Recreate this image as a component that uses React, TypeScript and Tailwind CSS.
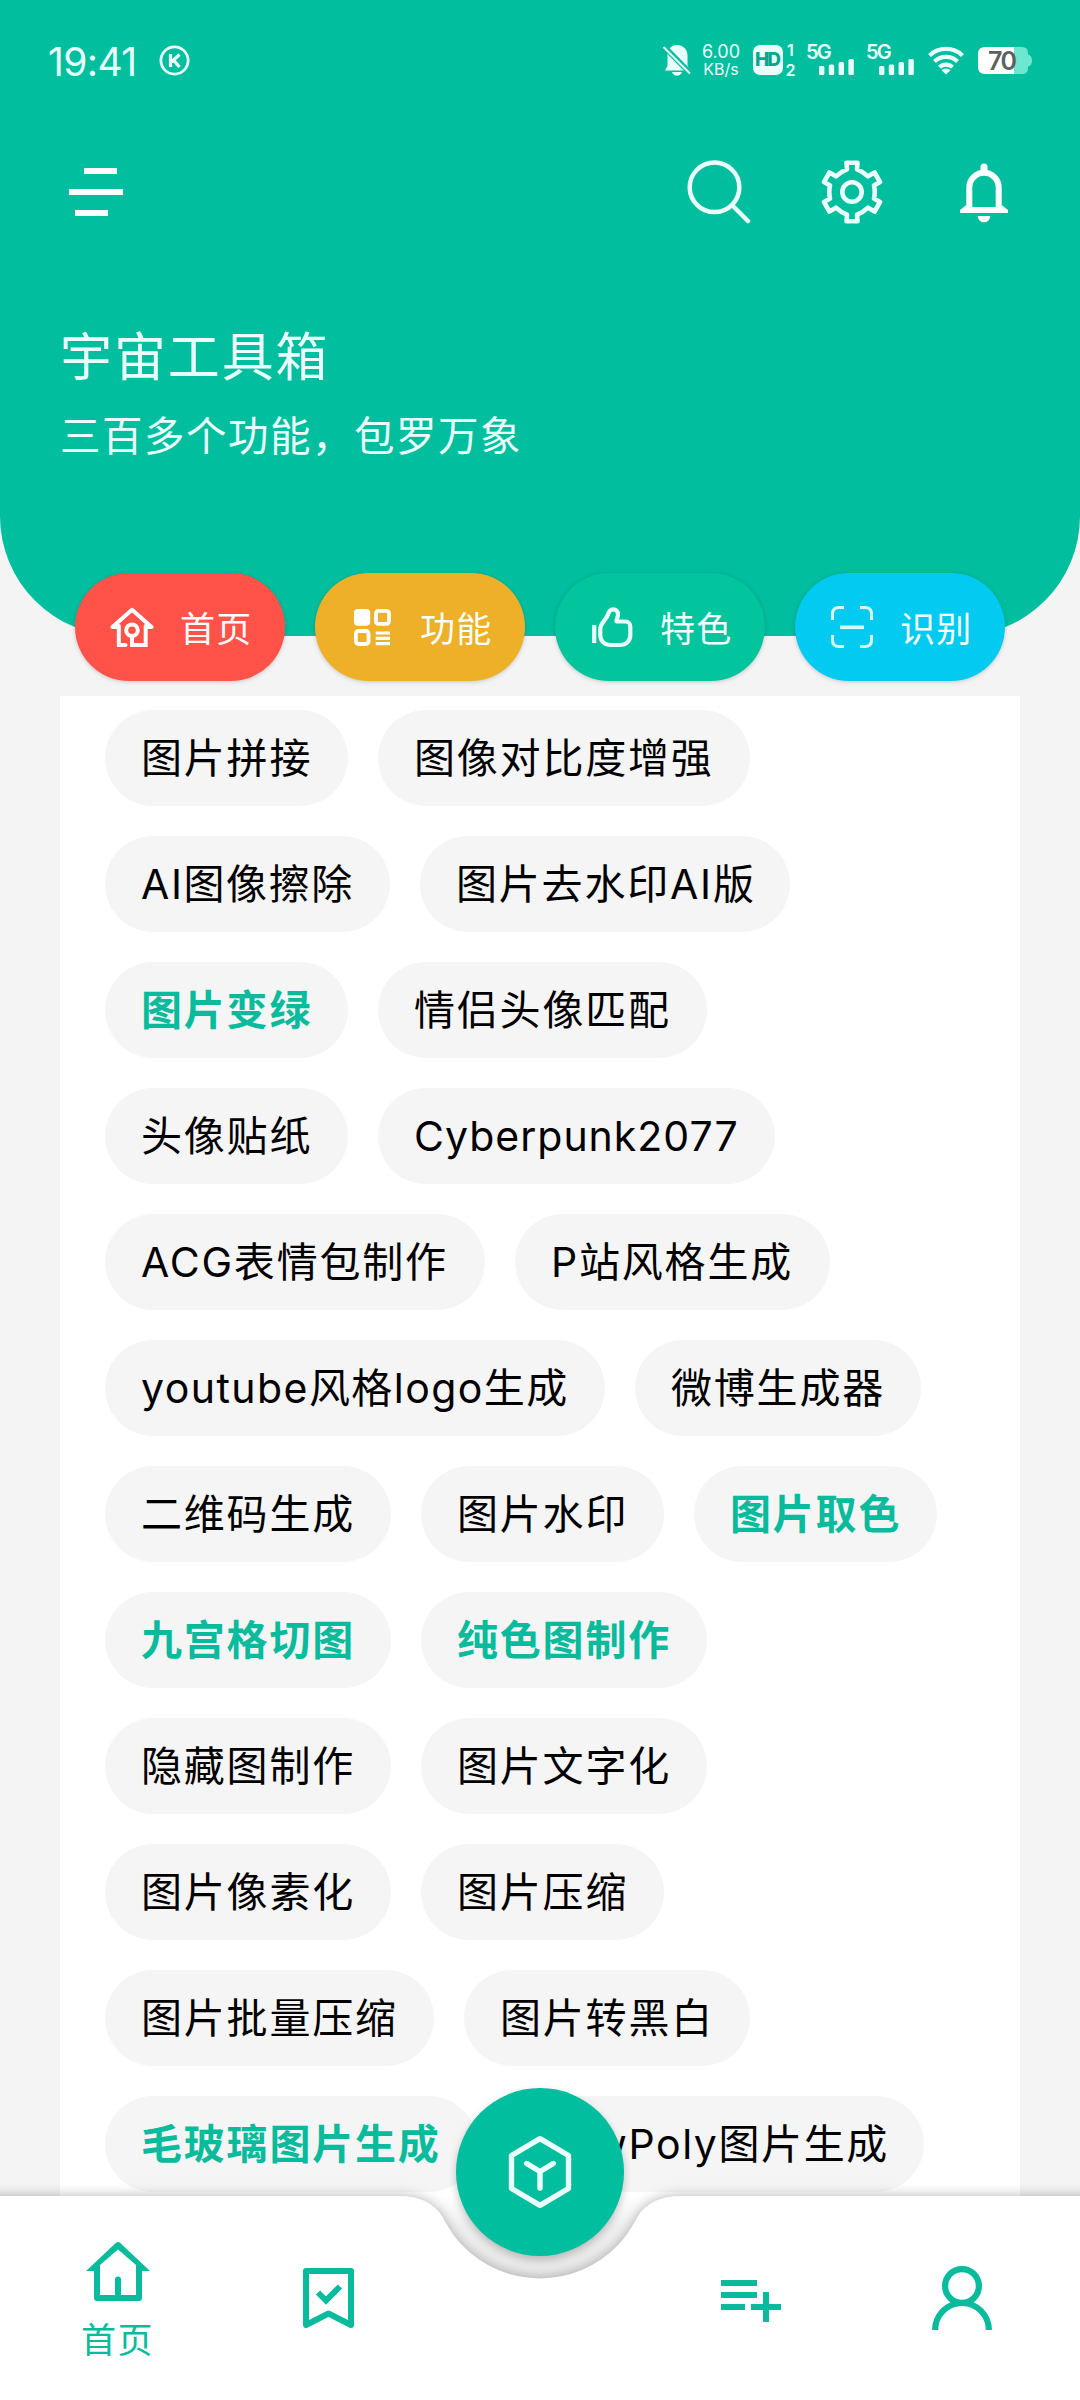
import React from "react";
import clsx from "clsx";

interface IChip {
  name: string;
  width: string;
  hot?: boolean;
  spacing?: string;
}

const chipRows: IChip[][] = [
  [
    { name: "图片拼接", width: "w-[243px]" },
    { name: "图像对比度增强", width: "w-[372px]" },
  ],
  [
    { name: "AI图像擦除", width: "w-[285px]", spacing: "tracking-[1.6px]" },
    { name: "图片去水印AI版", width: "w-[370px]" },
  ],
  [
    { name: "图片变绿", width: "w-[243px]", hot: true },
    { name: "情侣头像匹配", width: "w-[329px]" },
  ],
  [
    { name: "头像贴纸", width: "w-[243px]" },
    { name: "Cyberpunk2077", width: "w-[397px]", spacing: "tracking-[1px]" },
  ],
  [
    { name: "ACG表情包制作", width: "w-[380px]" },
    { name: "P站风格生成", width: "w-[315px]" },
  ],
  [
    { name: "youtube风格logo生成", width: "w-[500px]", spacing: "tracking-[1.45px]" },
    { name: "微博生成器", width: "w-[286px]" },
  ],
  [
    { name: "二维码生成", width: "w-[286px]" },
    { name: "图片水印", width: "w-[243px]" },
    { name: "图片取色", width: "w-[243px]", hot: true },
  ],
  [
    { name: "九宫格切图", width: "w-[286px]", hot: true },
    { name: "纯色图制作", width: "w-[286px]", hot: true },
  ],
  [
    { name: "隐藏图制作", width: "w-[286px]" },
    { name: "图片文字化", width: "w-[286px]" },
  ],
  [
    { name: "图片像素化", width: "w-[286px]" },
    { name: "图片压缩", width: "w-[243px]" },
  ],
  [
    { name: "图片批量压缩", width: "w-[329px]" },
    { name: "图片转黑白", width: "w-[286px]" },
  ],
  [
    { name: "毛玻璃图片生成", width: "w-[372px]", hot: true },
    { name: "LowPoly图片生成", width: "w-[417px]", spacing: "tracking-[1.6px]" },
  ],
];

function SignalIcon() {
  return (
    <div className="relative w-[48px] h-[30px]">
      <span className="absolute left-[-1px] top-[-3px] text-[20px] leading-[20px] font-semibold tracking-[-1.8px]">
        5G
      </span>
      <svg className="absolute left-[12px] top-[14px]" width="36" height="16" fill="currentColor">
        <rect x="0" y="7" width="5.4" height="9" rx="1.5" />
        <rect x="9.8" y="5.5" width="5.4" height="10.5" rx="1.5" />
        <rect x="19.6" y="3" width="5.4" height="13" rx="1.5" />
        <rect x="29.4" y="0" width="5.4" height="16" rx="1.5" />
      </svg>
    </div>
  );
}

function StatusBar() {
  return (
    <div className="h-[120px] pl-[48px] pr-[48px] flex items-center justify-between text-[#eafffb]">
      <div className="flex items-center">
        <span className="w-[111px] mt-[3px] text-[39px] leading-[38px] tracking-[-0.6px]">19:41</span>
        <svg width="31" height="31" viewBox="0 0 31 31" fill="none" stroke="currentColor">
          <circle cx="15.5" cy="15.5" r="13.6" strokeWidth="2.8" />
          <path d="M11.500 9v13M20.500 9.500l-8 7.500M14.500 15l6 7" strokeWidth="3.200" />
        </svg>
      </div>
      <div className="flex items-center">
        <svg width="28" height="31" viewBox="0 0 28 31" fill="currentColor">
          <path d="M14 0c6 0 10.500 4.500 10.500 10.500V21l3 4.500H2L4.500 21V10.500C4.500 4.500 8 0 14 0Z" />
          <path d="M9 27h10c-1 2.500-2.800 3.800-5 3.800S10 29.500 9 27Z" />
          <path d="M0 .5 28 29" stroke="#00be9e" strokeWidth="5.500" />
          <path d="M.5 2 27 28.500" stroke="currentColor" strokeWidth="2" />
        </svg>
        <div className="w-[40px] ml-[10px] h-[33px] flex flex-col justify-between items-center leading-[15px]">
          <span className="text-[18px]">6.00</span>
          <span className="text-[16px]">KB/s</span>
        </div>
        <div className="ml-[12px] w-[30px] h-[30px] rounded-[7px] bg-[#eafffb] text-[#00a88e] text-[19px] leading-[30px] font-extrabold tracking-[-2px] pr-[2px] text-center">
          HD
        </div>
        <div className="ml-[2px] w-[11px] h-[36px] flex flex-col justify-between items-center text-[16px] leading-[16px] font-semibold">
          <span>1</span>
          <span>2</span>
        </div>
        <div className="ml-[11px] flex gap-[12px]">
          <SignalIcon />
          <SignalIcon />
        </div>
        <svg className="ml-[13px]" width="36" height="29" viewBox="0 0 36 29" fill="none" stroke="currentColor" strokeWidth="4.200">
          <path d="M1.500 9.500a24 24 0 0 1 33 0" />
          <path d="M6.500 15.500a16.500 16.500 0 0 1 23 0" />
          <path d="M11.500 21.200a9.500 9.500 0 0 1 13 0" />
          <path d="m18 28.500-4.500-4.300a6.500 6.500 0 0 1 9 0z" fill="currentColor" stroke="none" />
        </svg>
        <div className="relative ml-[14px] w-[54px] h-[27px]">
          <svg width="54" height="27" viewBox="0 0 54 27">
            <path d="M36 0h8q6 0 6 6v1.500q4 1 4 6t-4 6V21q0 6-6 6h-8z" fill="#6fe6cf" />
            <path d="M36 0H7Q0 0 0 7v13q0 7 7 7h29z" fill="#ffffff" />
          </svg>
          <span className="absolute left-[10px] top-0 text-[25px] leading-[28px] font-semibold tracking-[-1.500px] text-[#5b6060]">
            70
          </span>
        </div>
      </div>
    </div>
  );
}

function Toolbar() {
  return (
    <div className="h-[144px] pl-[69px] pr-[72px] flex items-center justify-between text-[#eafffb]">
      <svg width="54" height="48" fill="#ffffff">
        <rect x="15" y="0" width="33" height="6" />
        <rect x="0" y="21" width="54" height="6" />
        <rect x="6" y="42" width="33" height="6" />
      </svg>
      <div className="flex items-center">
        <svg width="66" height="64" viewBox="0 0 66 64" fill="none" stroke="currentColor" strokeWidth="4.500">
          <circle cx="27.500" cy="27.300" r="24.800" />
          <path d="m45.500 45.500 15.500 15.500" strokeLinecap="round" />
        </svg>
        <svg className="ml-[68px]" width="62" height="64" viewBox="-31 -32 62 64" fill="none" stroke="currentColor" strokeWidth="4.600" strokeLinejoin="round">
          <path d="M-5.500-29.300H5.500L5-22.700Q11-20.500 16-15.700L22.600-19.500 28-10 22-6.500Q23.500 0 22 6.500L28 10 22.600 19.500 16 15.700Q11 20.500 5 22.700L5.500 29.300H-5.500L-5 22.700Q-11 20.500-16 15.700L-22.600 19.500-28 10-22 6.500Q-23.500 0-22-6.500L-28-10-22.600-19.500-16-15.700Q-11-20.500-5-22.700Z" />
          <circle r="9.700" />
        </svg>
        <svg className="ml-[77px]" width="48" height="64" viewBox="0 0 48 64">
          <path d="M9.300 49V27.400a14.700 14.700 0 0 1 29.400 0V49" fill="none" stroke="#ffffff" strokeWidth="6" />
          <path d="M6.500 45 0 50v3h48v-3l-6.500-5v2H6.500zM20.500 12V7a3.500 3.500 0 0 1 7 0v5zM17.700 56h12.600a6.300 6.300 0 0 1-12.600 0z" fill="#ffffff" />
        </svg>
      </div>
    </div>
  );
}

function QuickButtons() {
  const buttons = [
    {
      name: "首页",
      color: "bg-[#ff5249]",
      icon: (
        <svg width="44" height="40" viewBox="0 0 44 40" fill="none" stroke="#ffffff" strokeWidth="4">
          <path d="M2.500 20 22 2.800 41.500 20" strokeLinejoin="round" strokeLinecap="round" />
          <path d="M8.800 19v19H15.500M22 29v9h13.700V19" strokeLinecap="round" />
          <path d="M3 20.300h6M35 20.300h6" strokeWidth="3.500" />
          <circle cx="22" cy="23.300" r="5.800" />
        </svg>
      ),
    },
    {
      name: "功能",
      color: "bg-[#edb028]",
      icon: (
        <svg width="37" height="37" viewBox="0 0 37 37" fill="none" stroke="#ffffff" strokeWidth="3.800">
          <rect x="0" y="0" width="16.200" height="16.700" rx="4" fill="#ffffff" stroke="none" />
          <rect x="22" y="1.900" width="13" height="13" rx="2.500" />
          <rect x="1.900" y="22" width="12.600" height="13" rx="2.500" />
          <path d="M21.700 24H36M21.700 29.300H36M21.700 34.700H36" strokeWidth="3.200" />
        </svg>
      ),
    },
    {
      name: "特色",
      color: "bg-[#02c49d]",
      icon: (
        <svg width="41" height="41" viewBox="0 0 41 41" fill="none" stroke="#eafffb" strokeWidth="4.200">
          <path d="M2.200 18v18" />
          <path d="M8.300 22C8.300 16 14 13.500 16 7.500 17 3.800 18.500 2.300 21 2.300c3 0 5 2.200 5 5.200 0 2.500-1.500 4.500-1.500 7H33c3.500 0 5.300 2.500 5.300 5.500v8c0 6-4.300 10-10.300 10h-9C12.500 38 8.300 34 8.300 28Z" strokeLinejoin="round" />
        </svg>
      ),
    },
    {
      name: "识别",
      color: "bg-[#02caf1]",
      icon: (
        <svg width="42" height="42" viewBox="0 0 42 42" fill="none" stroke="#d8fbff" strokeWidth="3">
          <path d="M1.500 14V8q0-6.500 6.500-6.500h5M29 1.500h5q6.500 0 6.500 6.500v6M40.500 29v5q0 6.500-6.500 6.500h-5M13 40.500H8Q1.500 40.500 1.500 34v-5" />
          <path d="M9 21.300h24" strokeWidth="3.600" />
        </svg>
      ),
    },
  ];

  return (
    <div className="relative -mt-[63px] px-[75px] flex gap-[30px]">
      {buttons.map((button) => (
        <button
          key={button.name}
          className={clsx(
            "w-[210px] h-[108px] pl-[33px] rounded-full flex items-center gap-[24px] shadow-[0_1px_4px_rgba(0,0,0,0.18)]",
            button.color
          )}
        >
          <span className="w-[48px] flex justify-center">{button.icon}</span>
          <span className="mt-[3px] text-[35px] leading-[48px] tracking-[1.200px] text-[#f6fffd] whitespace-nowrap">
            {button.name}
          </span>
        </button>
      ))}
    </div>
  );
}

function BottomNav() {
  return (
    <div className="absolute left-0 bottom-0 w-full h-[204px]">
      <svg className="absolute left-0 top-0 overflow-visible" width="1080" height="204">
        <defs>
          <linearGradient id="notch" x1="0" y1="0" x2="0" y2="1">
            <stop offset="0" stopColor="#f0f0f0" stopOpacity="0" />
            <stop offset="0.35" stopColor="#efefef" />
            <stop offset="1" stopColor="#e8e8e8" />
          </linearGradient>
        </defs>
        <path d="M400 0H680V90H400Z" fill="url(#notch)" />
        <path
          className="drop-shadow-[0_-1px_6px_rgba(0,0,0,0.26)]"
          d="M-30 0H398C420 0 434 7 442.500 21C450 34 455 42 463 50A107.500 107.500 0 0 0 617 50C625 42 630 34 637.500 21C646 7 660 0 682 0H1110V240H-30Z"
          fill="#ffffff"
        />
      </svg>
      <div className="relative h-full px-[12px] grid grid-cols-5 text-[#08bb9c]">
        <div className="flex flex-col items-center pt-[46px]">
          <svg width="64" height="59" viewBox="0 0 64 59" fill="currentColor" fillRule="evenodd">
            <path d="M30 .8q2-1.600 4 0L64 29H56V56q0 3-3 3H11q-3 0-3-3V29H0ZM14 53H29V37.500q0-3 3-3t3 3V53H50V23L32 7.500 14 23Z" />
          </svg>
          <span className="mt-[15px] text-[35px] leading-[48px] tracking-[1.500px]">首页</span>
        </div>
        <div className="flex justify-center pt-[72px]">
          <svg width="51" height="60" viewBox="0 0 51 60" fill="none" stroke="currentColor" strokeWidth="6">
            <path d="M3 3h45v54L25.500 45.500 3 57Z" strokeLinejoin="round" />
            <path d="m15 24.500 8 8L37 18.500" />
          </svg>
        </div>
        <div />
        <div className="flex justify-center pt-[84px]">
          <svg width="61" height="42" viewBox="0 0 61 42" fill="currentColor">
            <path d="M0 0h36v6H0zM0 12h36v6H0zM0 24h24v6H0zM30 24h12V12h6v12h12v6H48v12h-6V30H30z" />
          </svg>
        </div>
        <div className="flex justify-center pt-[70px]">
          <svg width="60" height="64" viewBox="0 0 60 64" fill="none" stroke="currentColor" strokeWidth="6.200">
            <circle cx="30" cy="20" r="16.900" />
            <path d="M3.100 64a26.900 27 0 0 1 53.800 0" />
          </svg>
        </div>
      </div>
      <button className="absolute left-[456px] -top-[108px] w-[168px] h-[168px] rounded-full bg-[#00be9e] flex items-center justify-center shadow-[0_4px_9px_rgba(0,0,0,0.22)]">
        <svg width="64" height="74" viewBox="-32 -37 64 74" fill="none" stroke="#eafffb" strokeWidth="5.400" strokeLinejoin="round" strokeLinecap="round">
          <path d="M0-33.300 28.500-16.500V16.500L0 33.300-28.500 16.500V-16.500Z" />
          <path d="M-13.300-8.500 0-.5 13.300-8.500M0-.5V16" />
        </svg>
      </button>
    </div>
  );
}

export default function App() {
  return (
    <div className="relative w-[1080px] h-[2400px] overflow-hidden bg-[#f4f4f4] font-[Inter,'Noto_Sans_CJK_SC',sans-serif]">
      <header className="h-[636px] bg-[#00be9e] rounded-b-[120px]">
        <StatusBar />
        <Toolbar />
        <div className="pl-[60px] pt-[58px] text-[#eafffb]">
          <h1 className="text-[52px] leading-[72px] tracking-[1.900px]">宇宙工具箱</h1>
          <p className="mt-[13px] text-[40.500px] leading-[60px] tracking-[1.500px]">
            三百多个功能，包罗万象
          </p>
        </div>
      </header>

      <QuickButtons />

      <main className="mx-[60px] mt-[15px] h-[1704px] pt-[14px] pl-[45px] bg-white flex flex-col gap-[30px]">
        {chipRows.map((row, index) => (
          <div key={index} className="flex gap-[30px]">
            {row.map((chip) => (
              <button
                key={chip.name}
                className={clsx(
                  "h-[96px] pl-[36px] rounded-full bg-[#f5f5f5] text-left text-[41px] leading-[97px] whitespace-nowrap",
                  chip.width,
                  chip.spacing ?? "tracking-[1.8px]",
                  chip.hot ? "font-semibold text-[#08bb9c]" : "text-black"
                )}
              >
                {chip.name}
              </button>
            ))}
          </div>
        ))}
      </main>

      <BottomNav />
    </div>
  );
}
